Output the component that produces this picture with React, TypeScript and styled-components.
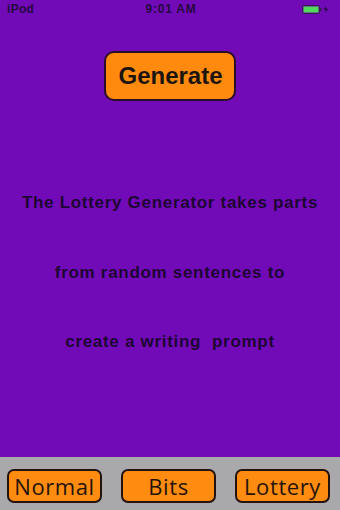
import React from "react";
import styled, { createGlobalStyle } from "styled-components";

const GlobalStyle = createGlobalStyle`
  html, body { margin: 0; padding: 0; background: #710bb8; }
  * { box-sizing: border-box; }
`;

const Screen = styled.div`
  width: 340px;
  height: 510px;
  display: flex;
  flex-direction: column;
  background: #710bb8;
  font-family: "Liberation Sans", Arial, sans-serif;
  overflow: hidden;
`;

const StatusBar = styled.div`
  height: 18px;
  display: grid;
  grid-template-columns: 1fr auto 1fr;
  align-items: center;
  padding: 0 7px;
  font-size: 12px;
  font-weight: 700;
  color: #25083f;
`;

const Carrier = styled.span`
  justify-self: start;
  letter-spacing: 0.3px;
`;

const Clock = styled.span`
  justify-self: center;
  letter-spacing: 0.8px;
  padding-left: 2px;
`;

const BatteryWrap = styled.div`
  justify-self: end;
  display: flex;
  align-items: center;
  padding-right: 1px;
`;

const Main = styled.main`
  flex: 1;
  display: flex;
  flex-direction: column;
  align-items: center;
`;

const GenerateButton = styled.button`
  margin-top: 33px;
  width: 132px;
  height: 50px;
  border-radius: 10px;
  border: 2px solid #2b0d2a;
  background: #ff8a0e;
  font-family: "Liberation Sans", Arial, sans-serif;
  font-size: 24px;
  font-weight: 700;
  color: #1c1410;
  padding: 0 0 0 1px;
`;

const TextBlock = styled.div`
  margin-top: 67px;
  display: flex;
  flex-direction: column;
  align-items: center;
`;

const Line = styled.p`
  margin: 0;
  line-height: 69.5px;
  font-size: 17px;
  font-weight: 700;
  letter-spacing: 0.7px;
  white-space: pre;
  color: #1d0633;
`;

const TabBar = styled.nav`
  height: 53px;
  background: #a9a8aa;
  display: flex;
  justify-content: space-between;
  align-items: flex-start;
  padding: 12px 10px 0 7px;
`;

const TabButton = styled.button`
  width: 95px;
  height: 34px;
  border-radius: 7px;
  border: 2px solid #23120e;
  background: #ff8c10;
  font-family: "Open Sans", "Noto Sans", sans-serif;
  font-size: 22px;
  font-weight: 500;
  letter-spacing: 0.6px;
  color: #24140c;
  padding: 0;
  line-height: 28px;
`;

function Battery() {
  return (
    <svg width="30" height="9" viewBox="0 0 30 9">
      <rect x="0.5" y="0.5" width="17" height="8" rx="1" fill="none" stroke="#3a1a4a" strokeWidth="1" />
      <rect x="1.5" y="1.5" width="15" height="6" fill="#4fdc5a" />
      <rect x="18" y="3" width="1.5" height="3" fill="#3a1a4a" />
      <path d="M24 1 L21.5 5 H24 L23 8 L26.5 3.8 H24 Z" fill="#2a0a45" />
    </svg>
  );
}

export default function App() {
  return (
    <>
      <GlobalStyle />
      <Screen>
        <StatusBar>
          <Carrier>iPod</Carrier>
          <Clock>9:01 AM</Clock>
          <BatteryWrap>
            <Battery />
          </BatteryWrap>
        </StatusBar>
        <Main>
          <GenerateButton>Generate</GenerateButton>
          <TextBlock>
            <Line>The Lottery Generator takes parts</Line>
            <Line>from random sentences to</Line>
            <Line>create a writing  prompt</Line>
          </TextBlock>
        </Main>
        <TabBar>
          <TabButton>Normal</TabButton>
          <TabButton>Bits</TabButton>
          <TabButton>Lottery</TabButton>
        </TabBar>
      </Screen>
    </>
  );
}
